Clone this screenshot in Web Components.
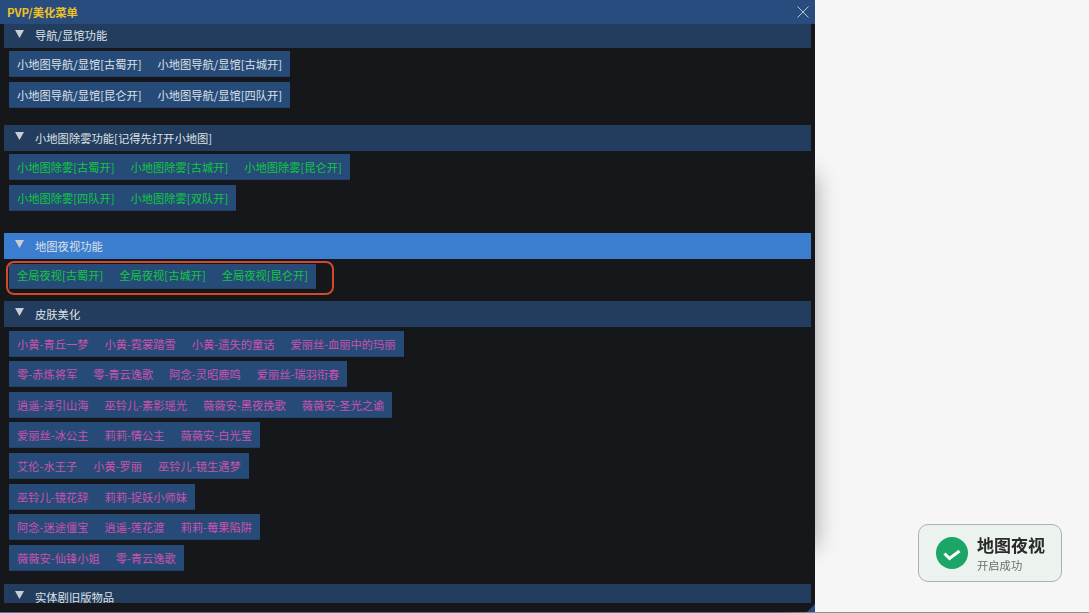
<!DOCTYPE html>
<html lang="zh">
<head>
<meta charset="utf-8">
<style>
  html, body { margin: 0; height: 100%; overflow: hidden; background: #f6f6f6; }
  body { font-family: "Noto Sans CJK SC", "Liberation Sans", sans-serif; }
</style>
</head>
<body>
<menu-page></menu-page>

<script>
const MENU = [
  { title: '导航/显馆功能', color: 'white', first: true, gap: 0, rows: [
    ['小地图导航/显馆[古蜀开]', '小地图导航/显馆[古城开]'],
    ['小地图导航/显馆[昆仑开]', '小地图导航/显馆[四队开]'],
  ] },
  { title: '小地图除雾功能[记得先打开小地图]', color: 'green', gap: 17, rows: [
    ['小地图除雾[古蜀开]', '小地图除雾[古城开]', '小地图除雾[昆仑开]'],
    ['小地图除雾[四队开]', '小地图除雾[双队开]'],
  ] },
  { title: '地图夜视功能', color: 'green', active: true, marked: true, gap: 21.5, rows: [
    ['全局夜视[古蜀开]', '全局夜视[古城开]', '全局夜视[昆仑开]'],
  ] },
  { title: '皮肤美化', color: 'pink', gap: 12.5, dense: true, rows: [
    ['小黄-青丘一梦', '小黄-霓裳踏雪', '小黄-遗失的童话', '爱丽丝-血丽中的玛丽'],
    ['零-赤炼将军', '零-青云逸歌', '阿念-灵昭鹿鸣', '爱丽丝-瑞羽衔春'],
    ['逍遥-泽引山海', '巫铃儿-素影瑶光', '薇薇安-黑夜挽歌', '薇薇安-圣光之谕'],
    ['爱丽丝-冰公主', '莉莉-情公主', '薇薇安-白光莹'],
    ['艾伦-水王子', '小黄-罗丽', '巫铃儿-镜生遇梦'],
    ['巫铃儿-镜花辞', '莉莉-捉妖小师妹'],
    ['阿念-迷途僵宝', '逍遥-莲花渡', '莉莉-莓果陷阱'],
    ['薇薇安-仙锋小姐', '零-青云逸歌'],
  ] },
  { title: '实体剧旧版物品', color: 'white', gap: 12.8, rows: [] },
]

const COLORS = { white: '#dde1e6', green: '#0fc83f', pink: '#cb52ad' }

class MenuRow extends HTMLElement {
  constructor() {
    super()
    this.attachShadow({ mode: 'open' })
  }

  connectedCallback() {
    const items = JSON.parse(this.getAttribute('items'))
    this.shadowRoot.innerHTML = `
      <style>
        :host {
          display: flex;
          height: var(--row-h, 26px);
        }
        .bar {
          display: flex;
          background: #274b78;
          box-shadow: inset 0 -1px 0 #22426b;
        }
        span {
          padding: 0 8px;
          font-size: 11.25px;
          line-height: var(--row-lh, 26px);
          white-space: nowrap;
          color: var(--row-color);
        }
      </style>
      <div class="bar">${items.map((t) => `<span>${t}</span>`).join('')}</div>
    `
  }
}

class MenuSection extends HTMLElement {
  constructor() {
    super()
    this.attachShadow({ mode: 'open' })
  }

  connectedCallback() {
    this.shadowRoot.innerHTML = `
      <style>
        :host {
          display: block;
          position: relative;
          --row-gap: 5px;
        }
        :host([dense]) { --row-gap: 4.67px; }
        :host([active]) { --row-h: 24.5px; --row-lh: 23px; }
        header {
          display: flex;
          align-items: center;
          height: 26px;
          padding-left: 11px;
          background: #233d5e;
          color: #dde1e6;
          font-size: 11.3px;
        }
        :host([active]) header { background: #3b7dcf; }
        :host([first]) header { height: 24px; }
        :host([first]) .label { margin-top: -2px; }
        svg { width: 9px; height: 8px; margin: -4px 11px 0 0; flex: none; }
        .rows {
          display: flex;
          flex-direction: column;
          gap: var(--row-gap);
          padding: 3px 0 0 5px;
        }
        :host([dense]) .rows { padding-top: 3.5px; }
        :host([active]) .rows { padding-top: 5.5px; }
        .mark {
          position: absolute;
          left: 2px;
          top: 28.5px;
          width: 323.5px;
          height: 30px;
          border: 2px solid #d5482a;
          border-radius: 8px;
        }
      </style>
      <header>
        <svg viewBox="0 0 9 8"><path d="M0 0H9L4.5 8Z" fill="#c9ced4"/></svg>
        <span class="label">${this.getAttribute('title-text')}</span>
      </header>
      <div class="rows"><slot></slot></div>
      ${this.hasAttribute('marked') ? '<div class="mark"></div>' : ''}
    `
  }
}

class MenuWindow extends HTMLElement {
  constructor() {
    super()
    this.attachShadow({ mode: 'open' })
  }

  connectedCallback() {
    this.shadowRoot.innerHTML = `
      <style>
        :host {
          display: flex;
          flex-direction: column;
          position: relative;
          width: 815px;
          height: 612px;
          background: #15171a;
        }
        :host::before {
          content: '';
          position: absolute;
          z-index: -1;
          left: 0;
          right: 0;
          top: 175px;
          bottom: 65px;
          box-shadow: 0 0 22px rgba(0, 0, 0, 0.35);
        }
        .title {
          display: flex;
          align-items: center;
          justify-content: space-between;
          flex: none;
          height: 24px;
          padding: 0 5px 0 7px;
          background: #284c7e;
          color: #eec223;
          font-size: 11.3px;
          font-weight: 700;
        }
        .title svg { width: 14px; height: 14px; }
        .content {
          height: 579px;
          margin: 0 4px;
          overflow: hidden;
        }
        .list {
          display: flex;
          flex-direction: column;
        }
        .corner {
          position: absolute;
          right: 0;
          bottom: 0;
          width: 0;
          height: 0;
          border-left: 8px solid transparent;
          border-bottom: 8px solid #284c7e;
        }
      </style>
      <div class="title">
        <span>PVP/美化菜单</span>
        <svg viewBox="0 0 14 14"><path d="M1.5 1.5L12.5 12.5M12.5 1.5L1.5 12.5" stroke="#b4c2d6" stroke-width="1" fill="none"/></svg>
      </div>
      <div class="content"><div class="list"><slot></slot></div></div>
      <div class="corner"></div>
    `
  }
}

class ToastCard extends HTMLElement {
  constructor() {
    super()
    this.attachShadow({ mode: 'open' })
  }

  connectedCallback() {
    this.shadowRoot.innerHTML = `
      <style>
        :host {
          display: flex;
          align-items: center;
          gap: 9px;
          position: absolute;
          left: 918px;
          top: 523.5px;
          box-sizing: border-box;
          width: 144px;
          height: 58px;
          padding: 0 0 0 17px;
          background: #ecf2ed;
          border: 1px solid #adb0ad;
          border-radius: 10px;
        }
        svg { width: 32px; height: 32px; flex: none; }
        .text { display: flex; flex-direction: column; }
        .name { font-size: 17px; line-height: 24px; color: #2a2a2a; font-weight: 700; }
        .note { font-size: 11.3px; line-height: 16px; color: #6d6f6d; }
      </style>
      <svg viewBox="0 0 32 32">
        <circle cx="16" cy="16" r="16" fill="#1ba566"/>
        <path d="M8.5 16.5L13.5 21.5L23.5 14" stroke="#fff" stroke-width="3" fill="none"/>
      </svg>
      <div class="text">
        <span class="name">地图夜视</span>
        <span class="note">开启成功</span>
      </div>
    `
  }
}

class MenuPage extends HTMLElement {
  constructor() {
    super()
    this.attachShadow({ mode: 'open' })
  }

  connectedCallback() {
    this.shadowRoot.innerHTML = `
      <style>
        :host {
          display: block;
          position: relative;
          height: 613px;
          overflow: hidden;
          isolation: isolate;
          filter: blur(0.35px);
        }
        .strip {
          height: 1px;
          background: linear-gradient(90deg, #3f77b8 0, #55708f 24px, #55708f 780px, #8f8f8f 815px);
        }
      </style>
      <menu-window id="win"></menu-window>
      <div class="strip"></div>
      <toast-card></toast-card>
    `
    const win = this.shadowRoot.getElementById('win')
    MENU.forEach((sec) => {
      const el = document.createElement('menu-section')
      el.setAttribute('title-text', sec.title)
      el.style.setProperty('--row-color', COLORS[sec.color])
      el.style.marginTop = sec.gap + 'px'
      if (sec.first) el.setAttribute('first', '')
      if (sec.active) el.setAttribute('active', '')
      if (sec.marked) el.setAttribute('marked', '')
      if (sec.dense) el.setAttribute('dense', '')
      sec.rows.forEach((items) => {
        const row = document.createElement('menu-row')
        row.setAttribute('items', JSON.stringify(items))
        el.appendChild(row)
      })
      win.appendChild(el)
    })
  }
}

customElements.define('menu-row', MenuRow)
customElements.define('menu-section', MenuSection)
customElements.define('menu-window', MenuWindow)
customElements.define('toast-card', ToastCard)
customElements.define('menu-page', MenuPage)
</script>
</body>
</html>
